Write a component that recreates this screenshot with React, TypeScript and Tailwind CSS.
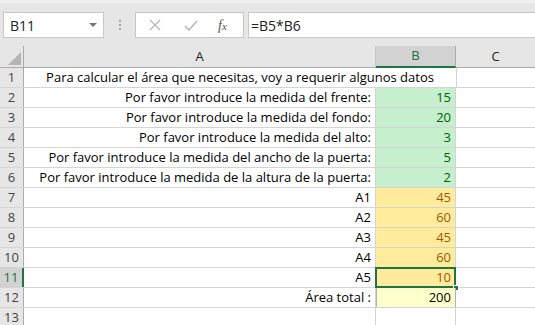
import React from 'react';

const rows = [
  { n: 1, a: 'Para calcular el área que necesitas, voy a requerir algunos datos', merged: true },
  { n: 2, a: 'Por favor introduce la medida del frente:', b: '15', kind: 'good' },
  { n: 3, a: 'Por favor introduce la medida del fondo:', b: '20', kind: 'good' },
  { n: 4, a: 'Por favor introduce la medida del alto:', b: '3', kind: 'good' },
  { n: 5, a: 'Por favor introduce la medida del ancho de la puerta:', b: '5', kind: 'good' },
  { n: 6, a: 'Por favor introduce la medida de la altura de la puerta:', b: '2', kind: 'good' },
  { n: 7, a: 'A1', b: '45', kind: 'neutral' },
  { n: 8, a: 'A2', b: '60', kind: 'neutral' },
  { n: 9, a: 'A3', b: '45', kind: 'neutral' },
  { n: 10, a: 'A4', b: '60', kind: 'neutral' },
  { n: 11, a: 'A5', b: '10', kind: 'neutral', selected: true },
  { n: 12, a: 'Área total :', b: '200', kind: 'note' },
  { n: 13 },
];

const bCell: Record<string, string> = {
  good: 'bg-[#c6efce] text-[#006100]',
  neutral: 'bg-[#ffeb9c] text-[#9c5700]',
  note: 'bg-[#ffffcc] text-black',
};

export default function App() {
  return (
    <div className="w-[535px] h-[325px] overflow-hidden bg-white text-[13px] text-black" style={{ fontFamily: '"Open Sans", "Liberation Sans", sans-serif' }}>
      {/* Formula bar */}
      <div className="h-[46px] bg-[#e6e6e6] border-t-[3px] border-[#f0f0f0] flex items-start pt-[9px] pl-[3px]">
        <div className="w-[101px] h-[26px] bg-white border border-[#c6c6c6] flex items-center justify-between pl-[6px] pr-[6px]">
          <span className="text-[14px] text-[#222]">B11</span>
          <span className="w-0 h-0 border-l-[4px] border-r-[4px] border-t-[4px] border-l-transparent border-r-transparent border-t-[#777]" />
        </div>
        <div className="w-[31px] h-[26px] flex flex-col items-center justify-center gap-[2px]">
          <span className="w-[2px] h-[2px] bg-[#a6a6a6]" />
          <span className="w-[2px] h-[2px] bg-[#a6a6a6]" />
          <span className="w-[2px] h-[2px] bg-[#a6a6a6]" />
        </div>
        <div className="w-[109px] h-[26px] bg-white border border-[#c6c6c6] flex items-center">
          <svg width="12" height="12" viewBox="0 0 12 12" className="ml-[13px]">
            <path d="M1 1 L11 11 M11 1 L1 11" stroke="#b8b8b8" strokeWidth="1.4" />
          </svg>
          <svg width="14" height="11" viewBox="0 0 14 11" className="ml-[23px]">
            <path d="M1 6 L5 10 L13 1" stroke="#b8b8b8" strokeWidth="1.6" fill="none" />
          </svg>
          <span className="ml-[20px] italic text-[14px] text-[#555]" style={{ fontFamily: '"Liberation Serif", serif' }}>
            f<span className="text-[11px]">x</span>
          </span>
        </div>
        <div className="ml-[4px] flex-1 h-[26px] bg-white border border-[#c6c6c6] border-r-0 flex items-center pl-[2px]">
          <span className="text-[14px] text-[#222]">=B5*B6</span>
        </div>
      </div>

      {/* Column headers */}
      <div className="flex h-[22px] bg-[#e6e6e6] border-b border-[#ababab]">
        <div className="w-[24px] shrink-0 border-r border-[#ababab] relative">
          <svg width="13" height="13" className="absolute right-[2px] bottom-[2px]">
            <path d="M13 0 L13 13 L0 13 Z" fill="#b4b4b4" />
          </svg>
        </div>
        <div className="w-[352px] shrink-0 border-r border-[#c6c6c6] flex items-center justify-center text-[#222]">A</div>
        <div className="w-[80px] shrink-0 border-r border-[#ababab] bg-[#d2d2d2] border-b-2 border-b-[#217346] flex items-center justify-center text-[#217346] -mb-px">B</div>
        <div className="flex-1 flex items-center justify-center text-[#222]">C</div>
      </div>

      {/* Rows */}
      {rows.map((r) => (
        <div key={r.n} className="flex h-[20px] border-b border-[#d4d4d4]">
          <div
            className={
              r.selected
                ? 'w-[24px] shrink-0 bg-[#d2d2d2] border-r-2 border-[#217346] flex items-center justify-center text-[#217346] text-[13px]'
                : 'w-[24px] shrink-0 bg-[#e6e6e6] border-r border-[#ababab] flex items-center justify-center text-[#444] text-[13px]'
            }
          >
            {r.n}
          </div>
          {r.merged ? (
            <div className="w-[433px] shrink-0 border-r border-[#d4d4d4] flex items-center justify-center whitespace-nowrap">
              {r.a}
            </div>
          ) : (
            <>
              <div className="w-[352px] shrink-0 border-r border-[#d4d4d4] flex items-center justify-end pr-[4px] whitespace-nowrap">
                {r.a}
              </div>
              <div
                className={
                  'w-[80px] shrink-0 flex items-center justify-end pr-[4px] relative ' +
                  (r.kind ? bCell[r.kind] : '') +
                  (r.kind === 'note' ? ' border-x border-[#b2b2b2]' : ' border-r border-[#d4d4d4]')
                }
              >
                {r.b}
                {r.selected && (
                  <>
                    <span className="absolute -left-px -top-px -right-px -bottom-px border-2 border-[#217346]" />
                    <span className="absolute -right-[4px] -bottom-[4px] w-[6px] h-[6px] bg-[#217346] border border-white" />
                  </>
                )}
              </div>
            </>
          )}
          <div className="flex-1" />
        </div>
      ))}
    </div>
  );
}
